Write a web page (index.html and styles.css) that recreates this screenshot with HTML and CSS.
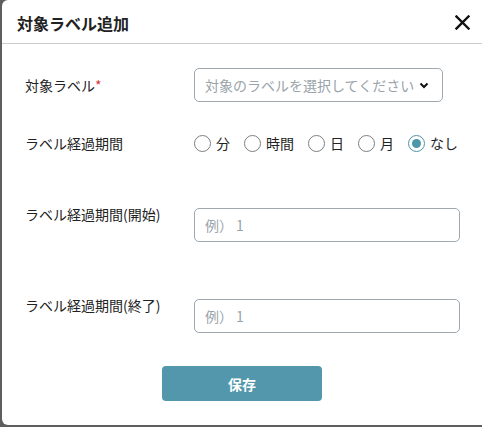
FILE: index.html
```html
<!DOCTYPE html>
<html lang="ja">
<head>
    <meta charset="UTF-8">
    <meta name="viewport" content="width=device-width, initial-scale=1.0">
    <title>対象ラベル追加</title>
    <link rel="stylesheet" href="styles.css">
</head>
<body>
    <div class="modal">
        <div class="modal-header">
            <h2 class="modal-title">対象ラベル追加</h2>
            <button class="close-button" aria-label="閉じる">
                <svg width="15" height="15" viewBox="0 0 15 15">
                    <path d="M1.5 1.5 L13.5 13.5 M13.5 1.5 L1.5 13.5" stroke="#111" stroke-width="2.4" stroke-linecap="square"/>
                </svg>
            </button>
        </div>
        <div class="modal-body">
            <div class="form-row row-target">
                <label class="form-label">対象ラベル<span class="required">*</span></label>
                <div class="select-box">
                    <span class="placeholder">対象のラベルを選択してください</span>
                    <svg class="chevron" width="10" height="7" viewBox="0 0 10 7">
                        <path d="M1.5 1.5 L5 5 L8.5 1.5" fill="none" stroke="#111" stroke-width="2"/>
                    </svg>
                </div>
            </div>
            <div class="form-row row-period">
                <label class="form-label">ラベル経過期間</label>
                <div class="radio-group">
                    <label class="radio"><span class="radio-circle"></span>分</label>
                    <label class="radio"><span class="radio-circle"></span>時間</label>
                    <label class="radio"><span class="radio-circle"></span>日</label>
                    <label class="radio"><span class="radio-circle"></span>月</label>
                    <label class="radio"><span class="radio-circle checked"></span>なし</label>
                </div>
            </div>
            <div class="form-row row-top row-start">
                <label class="form-label">ラベル経過期間(開始)</label>
                <div class="text-input">例）<span class="example-value">1</span></div>
            </div>
            <div class="form-row row-top row-end">
                <label class="form-label">ラベル経過期間(終了)</label>
                <div class="text-input">例）<span class="example-value">1</span></div>
            </div>
            <div class="actions">
                <button class="save-button">保存</button>
            </div>
        </div>
    </div>
</body>
</html>
```

FILE: styles.css
```css
body {
    margin: 0;
    height: 427px;
    overflow: hidden;
    background-color: #5e5e5e;
    font-family: "Noto Sans CJK JP", "Noto Sans", sans-serif;
    color: #222;
}
.modal {
    margin-left: 2px;
    width: 500px;
    height: 425px;
    background-color: white;
    border-radius: 6px 0 0 6px;
    box-sizing: border-box;
}
.modal-header {
    display: flex;
    align-items: center;
    justify-content: space-between;
    height: 43px;
    border-bottom: 1px solid #c9cdd0;
    padding: 0 0 0 15px;
}
.modal-title {
    margin: 0;
    font-size: 16px;
    font-weight: bold;
    line-height: 20px;
    padding-top: 2px;
}
.close-button {
    border: none;
    background: none;
    padding: 0;
    width: 15px;
    height: 15px;
    margin-right: 32px;
    margin-top: 1px;
    cursor: pointer;
}
.close-button svg {
    display: block;
}
.modal-body {
    padding: 24px 0 0 23px;
}
.form-row {
    display: flex;
    align-items: center;
}
.form-label {
    width: 169px;
    flex-shrink: 0;
    font-size: 14px;
    line-height: 20px;
}
.required {
    color: #d9363e;
}
.row-target {
    height: 34px;
}
.select-box {
    display: flex;
    align-items: center;
    justify-content: space-between;
    width: 249px;
    height: 34px;
    box-sizing: border-box;
    border: 1px solid #9ea8ae;
    border-radius: 5px;
    padding: 0 13px 0 10px;
}
.placeholder {
    font-size: 14px;
    color: #9aa3aa;
    white-space: nowrap;
}
.chevron {
    display: block;
}
.row-period {
    margin-top: 31px;
    height: 20px;
}
.radio-group {
    display: flex;
    gap: 14px;
}
.radio {
    display: flex;
    align-items: center;
    gap: 5px;
    font-size: 14px;
    line-height: 20px;
}
.radio-circle {
    width: 17px;
    height: 17px;
    box-sizing: border-box;
    border: 1px solid #7b7f83;
    border-radius: 50%;
    position: relative;
}
.radio-circle.checked {
    border-color: #4d95a9;
}
.radio-circle.checked::after {
    content: "";
    position: absolute;
    left: 3px;
    top: 3px;
    width: 9px;
    height: 9px;
    border-radius: 50%;
    background-color: #4d95a9;
}
.row-top {
    align-items: flex-start;
}
.row-top .form-label {
    margin-top: -4px;
}
.row-start {
    margin-top: 55px;
}
.row-end {
    margin-top: 57px;
}
.text-input {
    width: 266px;
    height: 34px;
    box-sizing: border-box;
    border: 1px solid #9ea8ae;
    border-radius: 5px;
    padding: 0 10px;
    font-size: 14px;
    line-height: 32px;
    color: #9aa3aa;
}
.example-value {
    margin-left: 3px;
}
.actions {
    margin-top: 33px;
    padding-left: 137px;
}
.save-button {
    width: 160px;
    height: 35px;
    border: none;
    border-radius: 4px;
    background-color: #5297ab;
    color: white;
    font-family: "Noto Sans CJK JP", sans-serif;
    font-size: 14px;
    font-weight: bold;
    cursor: pointer;
}
```
